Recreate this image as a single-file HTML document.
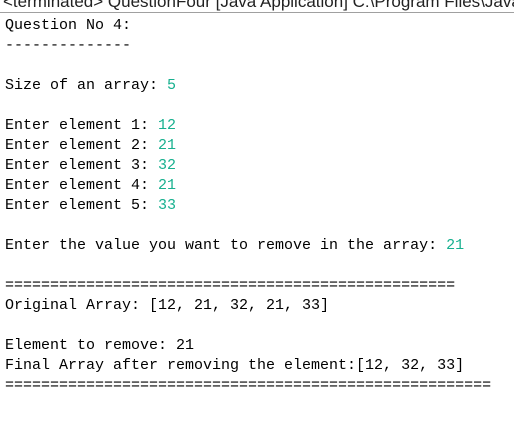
<!DOCTYPE html>
<html><head><style>
html,body{margin:0;padding:0;background:#fff;width:514px;height:439px;overflow:hidden;}
.hdr{position:absolute;left:3px;top:-8px;font-family:"Liberation Sans",sans-serif;font-size:17px;color:#222;white-space:nowrap;}
.rule{position:absolute;left:0;top:12px;width:514px;height:1px;background:#a0a0a0;}
pre{position:absolute;left:5px;top:16px;margin:0;font-family:"Liberation Mono",monospace;font-size:15px;line-height:20px;color:#000;}
.g{color:#17b08f;}
</style></head><body>
<div class="hdr">&lt;terminated&gt; QuestionFour [Java Application] C:\Program Files\Java</div>
<div class="rule"></div>
<pre>Question No 4:
--------------

Size of an array: <span class="g">5</span>

Enter element 1: <span class="g">12</span>
Enter element 2: <span class="g">21</span>
Enter element 3: <span class="g">32</span>
Enter element 4: <span class="g">21</span>
Enter element 5: <span class="g">33</span>

Enter the value you want to remove in the array: <span class="g">21</span>

==================================================
Original Array: [12, 21, 32, 21, 33]

Element to remove: 21
Final Array after removing the element:[12, 32, 33]
======================================================</pre>
</body></html>
